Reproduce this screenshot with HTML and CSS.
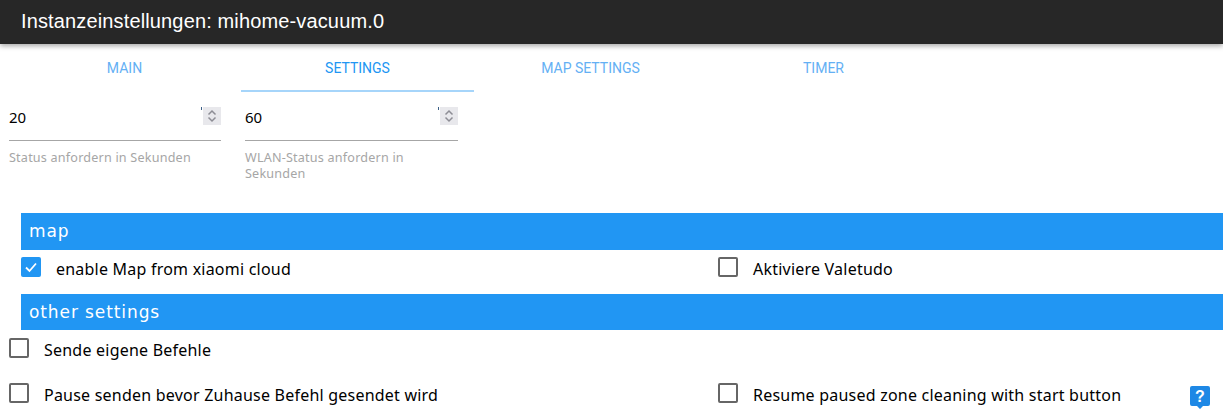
FILE: index.html
```html
<!DOCTYPE html>
<html lang="de">
<head>
<meta charset="utf-8">
<title>Instanzeinstellungen</title>
<link rel="stylesheet" href="styles.css">
</head>
<body>
<header class="appbar">Instanzeinstellungen: mihome-vacuum.0</header>
<nav class="tabs">
  <div class="tab">MAIN</div>
  <div class="tab active">SETTINGS</div>
  <div class="tab">MAP SETTINGS</div>
  <div class="tab">TIMER</div>
</nav>
<section class="fields">
  <div class="field">
    <div class="input"><span>20</span><span class="spin"><svg width="18" height="18" viewBox="0 0 18 18"><path d="M5.500 7.500 9 4l3.500 3.500M5.500 10.500 9 14l3.500-3.500" fill="none" stroke="#8d8d95" stroke-width="1.500"/></svg></span></div>
    <div class="hint">Status anfordern in Sekunden</div>
  </div>
  <div class="field">
    <div class="input"><span>60</span><span class="spin"><svg width="18" height="18" viewBox="0 0 18 18"><path d="M5.500 7.500 9 4l3.500 3.500M5.500 10.500 9 14l3.500-3.500" fill="none" stroke="#8d8d95" stroke-width="1.500"/></svg></span></div>
    <div class="hint">WLAN-Status anfordern in Sekunden</div>
  </div>
</section>
<h2 class="band first">map</h2>
<div class="row r-map">
  <label class="check on"><span class="box"><svg width="20" height="20" viewBox="0 0 20 20"><path d="M5 10.500 8.500 14 15 6.500" fill="none" stroke="#fff" stroke-width="1.800"/></svg></span>enable Map from xiaomi cloud</label>
  <label class="check"><span class="box"></span>Aktiviere Valetudo</label>
</div>
<h2 class="band">other settings</h2>
<div class="row r-other">
  <label class="check"><span class="box"></span>Sende eigene Befehle</label>
</div>
<div class="row r-other">
  <label class="check"><span class="box"></span>Pause senden bevor Zuhause Befehl gesendet wird</label>
  <label class="check"><span class="box"></span>Resume paused zone cleaning with start button</label>
</div>
<a class="help"><svg width="20" height="23" viewBox="0 0 20 23"><path d="M2 0h16a2 2 0 0 1 2 2v16a2 2 0 0 1-2 2h-5l-3 3-3-3H2a2 2 0 0 1-2-2V2a2 2 0 0 1 2-2z" fill="#1e88e5"/><text x="10" y="16" text-anchor="middle" class="q">?</text></svg></a>
</body>
</html>
```
FILE: styles.css
```css
html, body { margin: 0; padding: 0; background: #fff; }
body {
  width: 1223px;
  height: 415px;
  overflow: hidden;
  position: relative;
  font-family: "Noto Sans", sans-serif;
  color: #000;
}
.appbar {
  height: 44px;
  box-sizing: border-box;
  padding: 8px 0 0 21px;
  background: #272727;
  color: #fff;
  font: 20px/27px "Liberation Sans", sans-serif;
  letter-spacing: .14px;
  box-shadow: 0 2px 5px rgba(0,0,0,.35);
}
.tabs { display: flex; padding-left: 8px; height: 48px; }
.tab {
  width: 233px;
  box-sizing: border-box;
  text-align: center;
  padding-top: 15px;
  font: 14px/18px Roboto, sans-serif;
  color: #64b0f4;
}
.tab.active { color: #2196f3; border-bottom: 2px solid #a6d5fa; }
.fields { display: flex; padding-left: 9px; gap: 24px; height: 121px; }
.field { width: 212px; }
.field + .field { width: 213px; }
.input {
  height: 49px;
  box-sizing: border-box;
  border-bottom: 1px solid #a6a6a6;
  display: flex;
  justify-content: space-between;
  padding-top: 15px;
  font: 15px/20px "Noto Sans", sans-serif;
  position: relative;
}
.spin {
  width: 18px;
  height: 18px;
  background: #e8e8ec;
  display: block;
}
.spin::before {
  content: "";
  position: absolute;
  right: 19px;
  top: 15px;
  width: 1px;
  height: 3px;
  background: #3b5f86;
}
.spin svg { display: block; }
.hint {
  margin-top: 9px;
  font: 12.600px/16px "Noto Sans", sans-serif;
  letter-spacing: .2px;
  color: #a6a6a6;
}
.band {
  margin: 0 0 0 21px;
  height: 36px;
  background: #2196f3;
  color: #fff;
  padding-left: 8px;
  font: 400 17px/36px "DejaVu Sans", sans-serif;
  letter-spacing: .9px;
}
.band.first { height: 37px; }
.row { display: flex; }
.r-map { padding-left: 21px; height: 44px; padding-top: 7px; box-sizing: border-box; }
.r-other { padding-left: 9px; height: 45px; padding-top: 8px; box-sizing: border-box; }
.check {
  display: flex;
  align-items: flex-start;
  font: 16px/24px "Noto Sans", sans-serif;
  letter-spacing: .22px;
  width: 709px;
  flex: none;
}
.r-map .check { width: 697px; }
.check + .check, .r-map .check + .check { width: auto; }
.box {
  width: 20px;
  height: 20px;
  box-sizing: border-box;
  border: 2px solid #666;
  border-radius: 2px;
  margin-right: 15px;
  flex: none;
}
.on .box { border: 0; background: #2196f3; }
.box svg { display: block; }
.help { position: absolute; left: 1190px; top: 386px; }
.help svg { display: block; }
.q { font: 700 16px "Liberation Sans", sans-serif; fill: #fff; }
```
